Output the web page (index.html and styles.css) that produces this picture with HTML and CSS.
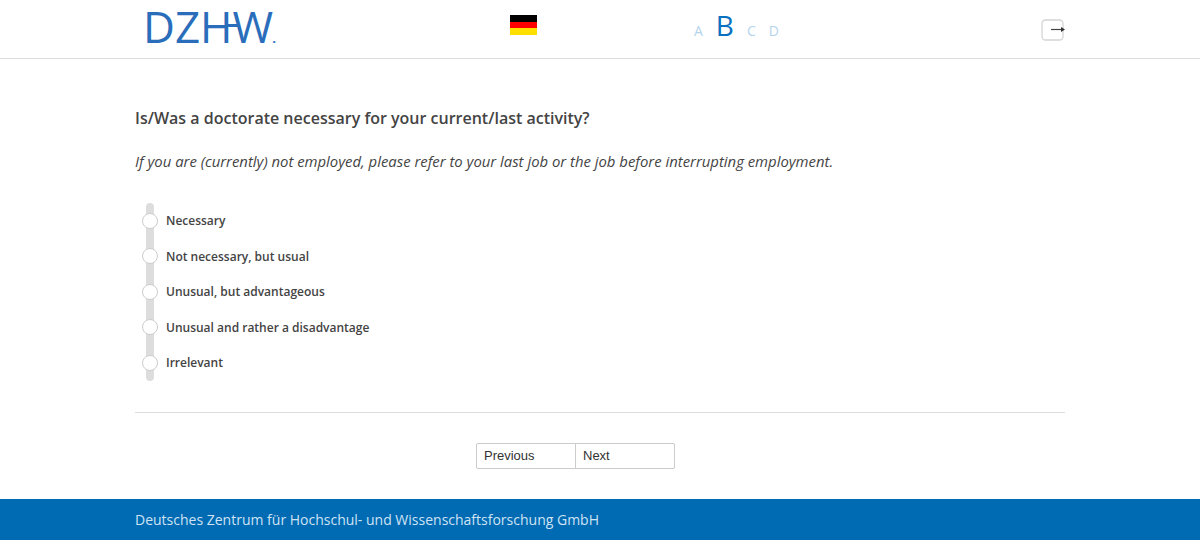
FILE: index.html
```html
<!DOCTYPE html>
<html lang="en">
<head>
  <meta charset="UTF-8" />
  <title>DZHW Survey</title>
  <link rel="stylesheet" href="styles.css">
</head>
<body>
  <header class="top">
    <div class="top-inner">
      <div class="logo">DZHW<span class="logo-dot">.</span></div>
      <svg class="flag" width="27" height="20" viewBox="0 0 27 20">
        <rect width="27" height="7" fill="#000"/>
        <rect y="7" width="27" height="6" fill="#f00"/>
        <rect y="13" width="27" height="7" fill="#ffdf00"/>
      </svg>
      <div class="modules">
        <span>A</span>
        <span class="active">B</span>
        <span>C</span>
        <span>D</span>
      </div>
      <svg class="exit" width="24" height="22" viewBox="0 0 24 22">
        <rect x="1" y="1" width="21" height="20" rx="3.5" fill="none" stroke="#d4d4d4" stroke-width="1.3"/>
        <path d="M10 10.5H20" stroke="#444" stroke-width="1.2"/>
        <path d="M20 8L24 10.5L20 13Z" fill="#333"/>
      </svg>
    </div>
  </header>

  <main class="container">
    <h1>Is/Was a doctorate necessary for your current/last activity?</h1>
    <p class="hint">If you are (currently) not employed, please refer to your last job or the job before interrupting employment.</p>

    <div class="options">
      <label class="option"><span class="radio"></span>Necessary</label>
      <label class="option"><span class="radio"></span>Not necessary, but usual</label>
      <label class="option"><span class="radio"></span>Unusual, but advantageous</label>
      <label class="option"><span class="radio"></span>Unusual and rather a disadvantage</label>
      <label class="option"><span class="radio"></span>Irrelevant</label>
    </div>

    <div class="nav">
      <button class="btn">Previous</button>
      <button class="btn">Next</button>
    </div>
  </main>

  <footer class="bottom">
    <div class="bottom-inner">Deutsches Zentrum für Hochschul- und Wissenschaftsforschung GmbH</div>
  </footer>
</body>
</html>
```

FILE: styles.css
```css
* { box-sizing: border-box; }

body {
  margin: 0;
  background: #fff;
  font-family: "Open Sans", sans-serif;
  color: #444;
}

.top {
  height: 59px;
  border-bottom: 1px solid #ddd;
}
.top-inner {
  width: 930px;
  height: 58px;
  margin: 0 auto;
  display: flex;
  align-items: flex-start;
}

.logo {
  position: relative;
  flex: 0 0 375px;
  padding-left: 8px;
  font-size: 44px;
  line-height: 53px;
  color: #2a6ebb;
  white-space: nowrap;
}
/* crossbar of the H runs on into the W */
.logo::after {
  content: "";
  position: absolute;
  left: 92px;
  top: 24px;
  width: 11px;
  height: 3px;
  background: #2a6ebb;
}
.logo-dot { font-size: 13px; font-weight: 700; margin-left: -1px; }

.flag { margin-top: 15px; }

.modules {
  margin-left: 157px;
  height: 58px;
  display: flex;
  align-items: baseline;
  gap: 13px;
  color: #b5d4ec;
  font-size: 14px;
  line-height: 20px;
  padding-top: 8px;
}
.modules .active {
  color: #0a70c0;
  font-size: 28px;
  font-weight: 500;
  line-height: 34px;
}

.exit { margin-left: auto; margin-top: 19px; }

.container {
  width: 930px;
  margin: 0 auto;
  height: 440px;
  padding-top: 47px;
}

h1 {
  margin: 0;
  font-size: 16px;
  font-weight: 600;
  line-height: 24px;
}

.hint {
  margin: 19px 0 0;
  font-size: 14.87px;
  font-style: italic;
  line-height: 24px;
}

.options {
  position: relative;
  margin-top: 30px;
  padding: 0 0 0 7px;
  height: 210px;
  border-bottom: 1px solid #ddd;
}
.options::before {
  content: "";
  position: absolute;
  left: 11px;
  top: 0;
  width: 8px;
  height: 178px;
  border-radius: 4px;
  background: #ddd;
}
.option {
  position: relative;
  display: flex;
  align-items: center;
  gap: 8px;
  height: 35.5px;
  font-size: 12px;
  font-weight: 600;
}
.radio {
  width: 16px;
  height: 16px;
  border-radius: 50%;
  background: #fff;
  border: 1px solid #ccc;
}

.nav {
  display: flex;
  margin: 30px 0 0 341px;
}
.btn {
  width: 100px;
  height: 26px;
  padding: 0 7px 2px;
  text-align: left;
  background: #fff;
  border: 1px solid #ccc;
  font-family: "Liberation Sans", sans-serif;
  font-size: 13px;
  color: #333;
}
.btn:first-child { border-radius: 2px 0 0 2px; }
.btn:last-child { margin-left: -1px; border-radius: 0 2px 2px 0; }

.bottom {
  height: 41px;
  background: #006ab3;
  color: #cfe3f3;
}
.bottom-inner {
  width: 930px;
  margin: 0 auto;
  font-size: 14px;
  line-height: 41px;
}
```
